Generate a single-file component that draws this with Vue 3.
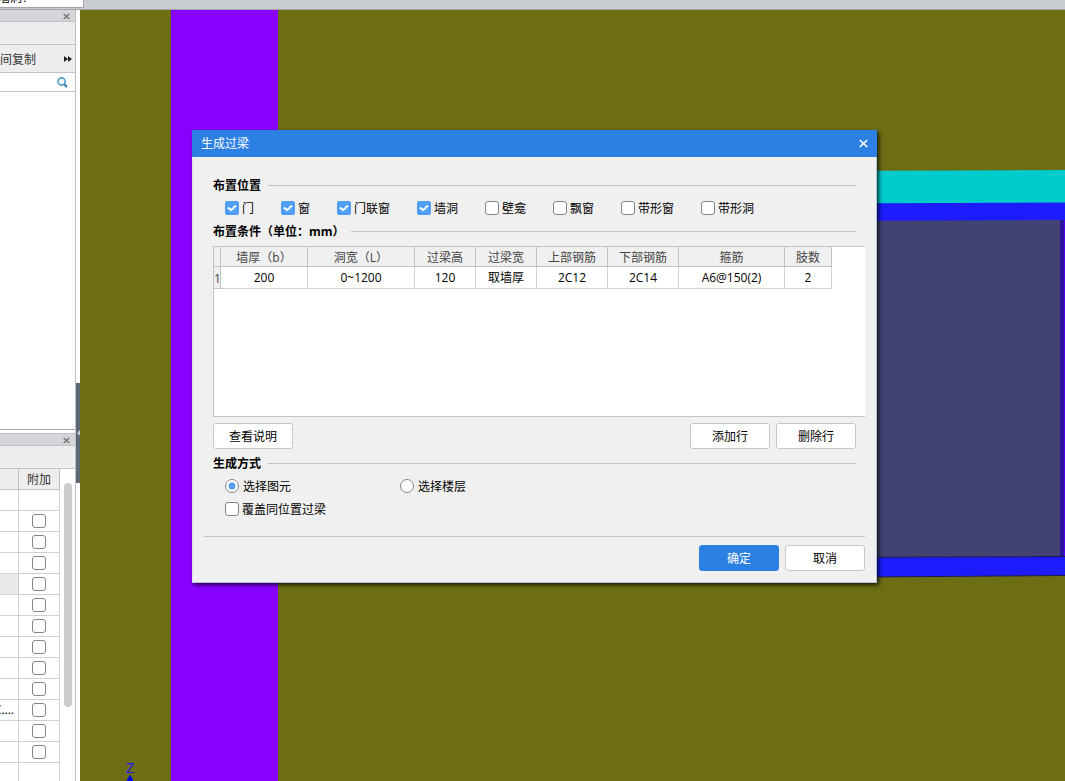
<script setup>
import { ref } from 'vue'

const places = ref([
  { name: '门', on: true },
  { name: '窗', on: true },
  { name: '门联窗', on: true },
  { name: '墙洞', on: true },
  { name: '壁龛', on: false },
  { name: '飘窗', on: false },
  { name: '带形窗', on: false },
  { name: '带形洞', on: false },
])
const columns = ['墙厚（b）', '洞宽（L）', '过梁高', '过梁宽', '上部钢筋', '下部钢筋', '箍筋', '肢数']
const rows = [['200', '0~1200', '120', '取墙厚', '2C12', '2C14', 'A6@150(2)', '2']]
const mode = ref('element')
const cover = ref(false)
const props = Array.from({ length: 14 }, (_, i) => ({
  value: i === 10 ? 'C....' : '',
  box: i > 0 && i < 13,
  selected: i === 4,
}))
</script>

<template>
  <div class="app">
    <header class="tabs"><div class="tab"><span>墙洞？</span></div></header>
    <div class="work">
      <aside class="side">
        <section class="panel list-panel">
          <div class="panel-head">
            <button class="close-small" aria-label="关闭">
              <svg width="7" height="7" viewBox="0 0 7 7"><path d="M.7 1 6.3 6M6.3 1 .7 6" stroke="#77777b" stroke-width="1.5" /></svg>
            </button>
          </div>
          <div class="bar first"></div>
          <div class="bar copy">
            <button class="copy-btn">间复制</button>
            <button class="more" aria-label="更多">
              <svg width="8" height="6" viewBox="0 0 8 6"><path d="M0 0l4 3-4 3zM4 0l4 3-4 3z" fill="#222" /></svg>
            </button>
          </div>
          <div class="search">
            <input type="text" aria-label="搜索" />
            <svg width="11" height="11" viewBox="0 0 11 11" fill="none">
              <circle cx="4.6" cy="4.5" r="3.600" stroke="#4a9cd0" stroke-width="1.600" />
              <path d="M7.2 7.200 10 10" stroke="#2e7fb8" stroke-width="2.200" />
            </svg>
          </div>
        </section>
        <section class="panel prop-panel">
          <div class="panel-head">
            <button class="close-small" aria-label="关闭">
              <svg width="7" height="7" viewBox="0 0 7 7"><path d="M.7 1 6.3 6M6.3 1 .7 6" stroke="#77777b" stroke-width="1.5" /></svg>
            </button>
          </div>
          <div class="bar second"></div>
          <div class="prop-body">
            <table class="prop-table">
              <thead>
                <tr><th class="pv"></th><th class="pa">附加</th></tr>
              </thead>
              <tbody>
                <tr v-for="(p, i) in props" :key="i">
                  <td class="pv" :class="{ selected: p.selected }"><div class="clip">{{ p.value }}</div></td>
                  <td class="pa"><input v-if="p.box" type="checkbox" class="tick" aria-label="附加" /></td>
                </tr>
              </tbody>
            </table>
            <div class="scroll"></div>
          </div>
        </section>
      </aside>
      <div class="gutter">
        <div class="handle">
          <svg width="3" height="6" viewBox="0 0 3 6"><path d="M3 0v6L0 3z" fill="#c4c8cc" /></svg>
        </div>
      </div>
      <main class="scene">
        <svg viewBox="80 10 985 771" preserveAspectRatio="xMinYMin slice">
          <rect x="80" y="10" width="985" height="771" fill="#6d6d14" />
          <rect x="171" y="10" width="107" height="771" fill="#8900ff" />
          <path d="M800 171 1065 170V204H800z" fill="#00cccd" />
          <path d="M800 203.5 1065 202.5V222H800z" fill="#1c1cff" />
          <path d="M800 221 1065 220V558H800z" fill="#434373" />
          <rect x="1060" y="220" width="4" height="338" fill="#2f14a0" />
          <rect x="1064" y="220" width="1" height="338" fill="#4a00e8" />
          <path d="M800 557.5 1065 556.5V575.5L800 577.5z" fill="#1c1cff" />
          <path d="M800 557.5 1065 556.5M800 577.5 1065 575.5" stroke="#1c1c50" stroke-width="1" />
          <text x="126" y="773" font-size="14" font-family="Liberation Sans, sans-serif" fill="#1a1aee">Z</text>
          <path d="M130 774.500 133.500 781H126.500z" fill="#0000ee" />
        </svg>
      </main>
    </div>

    <div class="dialog" role="dialog" aria-labelledby="dlg-title">
      <div class="title-bar">
        <h1 id="dlg-title">生成过梁</h1>
        <button class="close" aria-label="关闭">
          <svg width="9" height="9" viewBox="0 0 9 9"><path d="M.8 1 8.200 8M8.200 1 .8 8" stroke="#fff" stroke-width="1.700" /></svg>
        </button>
      </div>
      <div class="content">
        <h2>布置位置</h2>
        <div class="places">
          <label v-for="p in places" :key="p.name"><input v-model="p.on" type="checkbox" class="tick" /><span>{{ p.name }}</span></label>
        </div>
        <h2>布置条件（单位：mm）</h2>
        <div class="grid-box">
          <table class="cond">
            <colgroup>
              <col class="c7" /><col class="c87" /><col class="c107" /><col class="c61" /><col class="c61" /><col class="c71" /><col class="c71" /><col class="c106" /><col class="c47" />
            </colgroup>
            <thead>
              <tr><th></th><th v-for="c in columns" :key="c">{{ c }}</th></tr>
            </thead>
            <tbody>
              <tr v-for="(r, i) in rows" :key="i">
                <th class="idx">{{ i + 1 }}</th>
                <td v-for="(v, j) in r" :key="j">{{ v }}</td>
              </tr>
            </tbody>
          </table>
        </div>
        <div class="actions">
          <button class="btn">查看说明</button>
          <span class="space"></span>
          <button class="btn">添加行</button>
          <button class="btn">删除行</button>
        </div>
        <h2>生成方式</h2>
        <div class="modes">
          <label class="choice"><input v-model="mode" type="radio" name="mode" value="element" class="radio" /><span>选择图元</span></label>
          <label class="choice"><input v-model="mode" type="radio" name="mode" value="floor" class="radio" /><span>选择楼层</span></label>
          <label><input v-model="cover" type="checkbox" class="tick" /><span>覆盖同位置过梁</span></label>
        </div>
        <div class="footer">
          <button class="btn primary">确定</button>
          <button class="btn">取消</button>
        </div>
      </div>
    </div>
  </div>
</template>

<style>
body { margin: 0; overflow: hidden; }
</style>

<style scoped>
.app {
  position: relative;
  display: flex;
  flex-direction: column;
  height: 100vh;
  overflow: hidden;
  background: #fff;
  color: #000;
  font: 12px/18px "Open Sans", "Noto Sans CJK SC", sans-serif;
}
.app * { box-sizing: border-box; }
button, input { font: inherit; color: inherit; margin: 0; }
button { padding: 0; border: 0; background: none; }
svg { display: block; }

.tabs { flex: none; height: 10px; background: #c9ccd1; border-bottom: 1px solid #a2a2a6; }
.tab {
  display: flex;
  align-items: flex-end;
  width: 84px;
  height: 8px;
  padding-bottom: 2px;
  overflow: hidden;
  background: #fff;
  border-right: 1px solid #a2a2a6;
  border-bottom: 1px solid #a2a2a6;
}
.tab span { line-height: 14px; margin-left: -2px; }
.work { flex: 1; display: flex; min-height: 0; }
.side {
  flex: none;
  display: flex;
  flex-direction: column;
  gap: 3px;
  width: 76px;
  border-right: 1px solid #c0c0c3;
}
.list-panel { flex: none; height: 420px; border-bottom: 1px solid #a8a8ac; }
.prop-panel { flex: 1; display: flex; flex-direction: column; min-height: 0; }
.panel-head {
  flex: none;
  display: flex;
  align-items: center;
  justify-content: flex-end;
  height: 12px;
  padding: 2px 5px 0 0;
  background: #d5d5da;
  border-bottom: 1px solid #c0c0c5;
}
.prop-panel .panel-head { height: 13px; border-top: 1px solid #c0c0c5; }
.bar { flex: none; background: #eee; border-bottom: 1px solid #c4c4c8; }
.first { height: 23px; }
.second { height: 23px; }
.copy { display: flex; align-items: center; justify-content: space-between; height: 28px; padding-right: 3px; color: #333; }
.copy-btn { padding-top: 2px; }
.search { display: flex; align-items: center; height: 19px; padding-right: 7px; border-bottom: 1px solid #c4c4c8; }
.search input { flex: 1; min-width: 0; height: 16px; border: 0; outline: 0; padding: 0; }
.prop-body { flex: 1; display: flex; gap: 4px; min-height: 0; overflow: hidden; }
.prop-table { flex: none; width: 60px; height: 315px; table-layout: fixed; border-collapse: separate; border-spacing: 0; }
.prop-table th, .prop-table td { height: 21px; padding: 0; text-align: center; font-weight: 400; border-right: 1px solid #d0d0d0; border-bottom: 1px solid #d0d0d0; }
.prop-table th { padding-top: 2px; background: #eee; color: #333; border-color: #c0c0c0; }
.prop-table .pv { width: 19px; }
.prop-table .selected { background: #e9e9e9; }
.prop-table .tick { margin: 0 auto; }
.clip { display: flex; justify-content: flex-end; overflow: hidden; padding-right: 4px; }
.scroll { width: 8px; height: 224px; margin-top: 14px; border-radius: 4px; background: #cbcbcb; }
.gutter { flex: none; width: 4px; padding-top: 373px; background: #fff; }
.handle { display: flex; align-items: center; justify-content: flex-end; height: 100px; background: #5d6974; }
.scene { flex: 1; min-width: 0; background: #6d6d14; }
.scene svg { width: 100%; height: 100%; }

.dialog {
  position: absolute;
  left: 192px;
  top: 130px;
  width: 685px;
  background: #f0f0f0;
  box-shadow: inset -1px -1px #b4c4d6, inset 1px 0 #d9e3ee, 2px 2px 4px rgba(0, 0, 0, 0.75);
}
.title-bar { display: flex; align-items: center; justify-content: space-between; height: 27px; padding: 0 9px; background: #2d80e3; color: #fff; }
.title-bar h1 { margin: 0; font-size: 12px; font-weight: 400; }
.content { padding: 18px 12px 12px; }
h2 { display: flex; align-items: center; gap: 6px; height: 20px; margin: 0 9px; padding-top: 2px; font-size: 12px; font-weight: 700; }
h2::after { content: ""; flex: 1; height: 1px; margin-bottom: 2px; background: #c4c4c4; }
label { display: flex; align-items: center; gap: 3px; }
label span { padding-top: 2px; }
.choice { gap: 4px; }
.places { display: flex; gap: 27px; height: 26px; margin-left: 21px; }
.tick, .radio {
  appearance: none;
  flex: none;
  display: block;
  width: 14px;
  height: 14px;
  background: #fff;
  border: 1px solid #858585;
  border-radius: 3px;
}
.tick:checked {
  border-color: #4f9ff8;
  border-radius: 2px;
  background: #4f9ff8 url("data:image/svg+xml,%3Csvg xmlns='http://www.w3.org/2000/svg' viewBox='0 0 12 12'%3E%3Cpath d='M2 5.500 5 8.200 10 3.500' fill='none' stroke='white' stroke-width='2'/%3E%3C/svg%3E") center / 12px 12px no-repeat;
}
.radio { border-radius: 50%; }
.radio:checked { background: radial-gradient(circle, #4f9ff8 0 3px, #fff 4px); }
.grid-box { height: 171px; margin: 5px 0 6px 9px; background: #fff; border: 1px solid #c4c4c4; border-right: 0; }
.cond { width: 618px; table-layout: fixed; border-collapse: separate; border-spacing: 0; }
.cond th, .cond td { padding: 0; text-align: center; font-weight: 400; line-height: 16px; white-space: nowrap; border-right: 1px solid #d0d0d0; border-bottom: 1px solid #d0d0d0; }
.cond th { height: 20px; padding-top: 2px; background: #f0f0f0; color: #444; border-color: #c4c4c4; }
.cond td { height: 22px; }
.c7 { width: 7px; }
.c87 { width: 87px; }
.c107 { width: 107px; }
.c61 { width: 61px; }
.c71 { width: 71px; }
.c106 { width: 106px; }
.c47 { width: 47px; }
.actions { display: flex; gap: 6px; margin: 0 9px 4px; }
.space { flex: 1; }
.btn { width: 80px; height: 26px; padding-top: 2px; background: #fff; border: 1px solid #c8c8c8; border-radius: 3px; }
.primary { background: #2d80e3; border-color: #2d80e3; color: #fff; }
.modes { display: grid; grid-template-columns: 175px 175px; grid-auto-rows: 23px; margin: 1px 0 16px 21px; }
.footer { display: flex; justify-content: flex-end; gap: 6px; padding-top: 8px; border-top: 1px solid #c4c4c4; }
</style>
